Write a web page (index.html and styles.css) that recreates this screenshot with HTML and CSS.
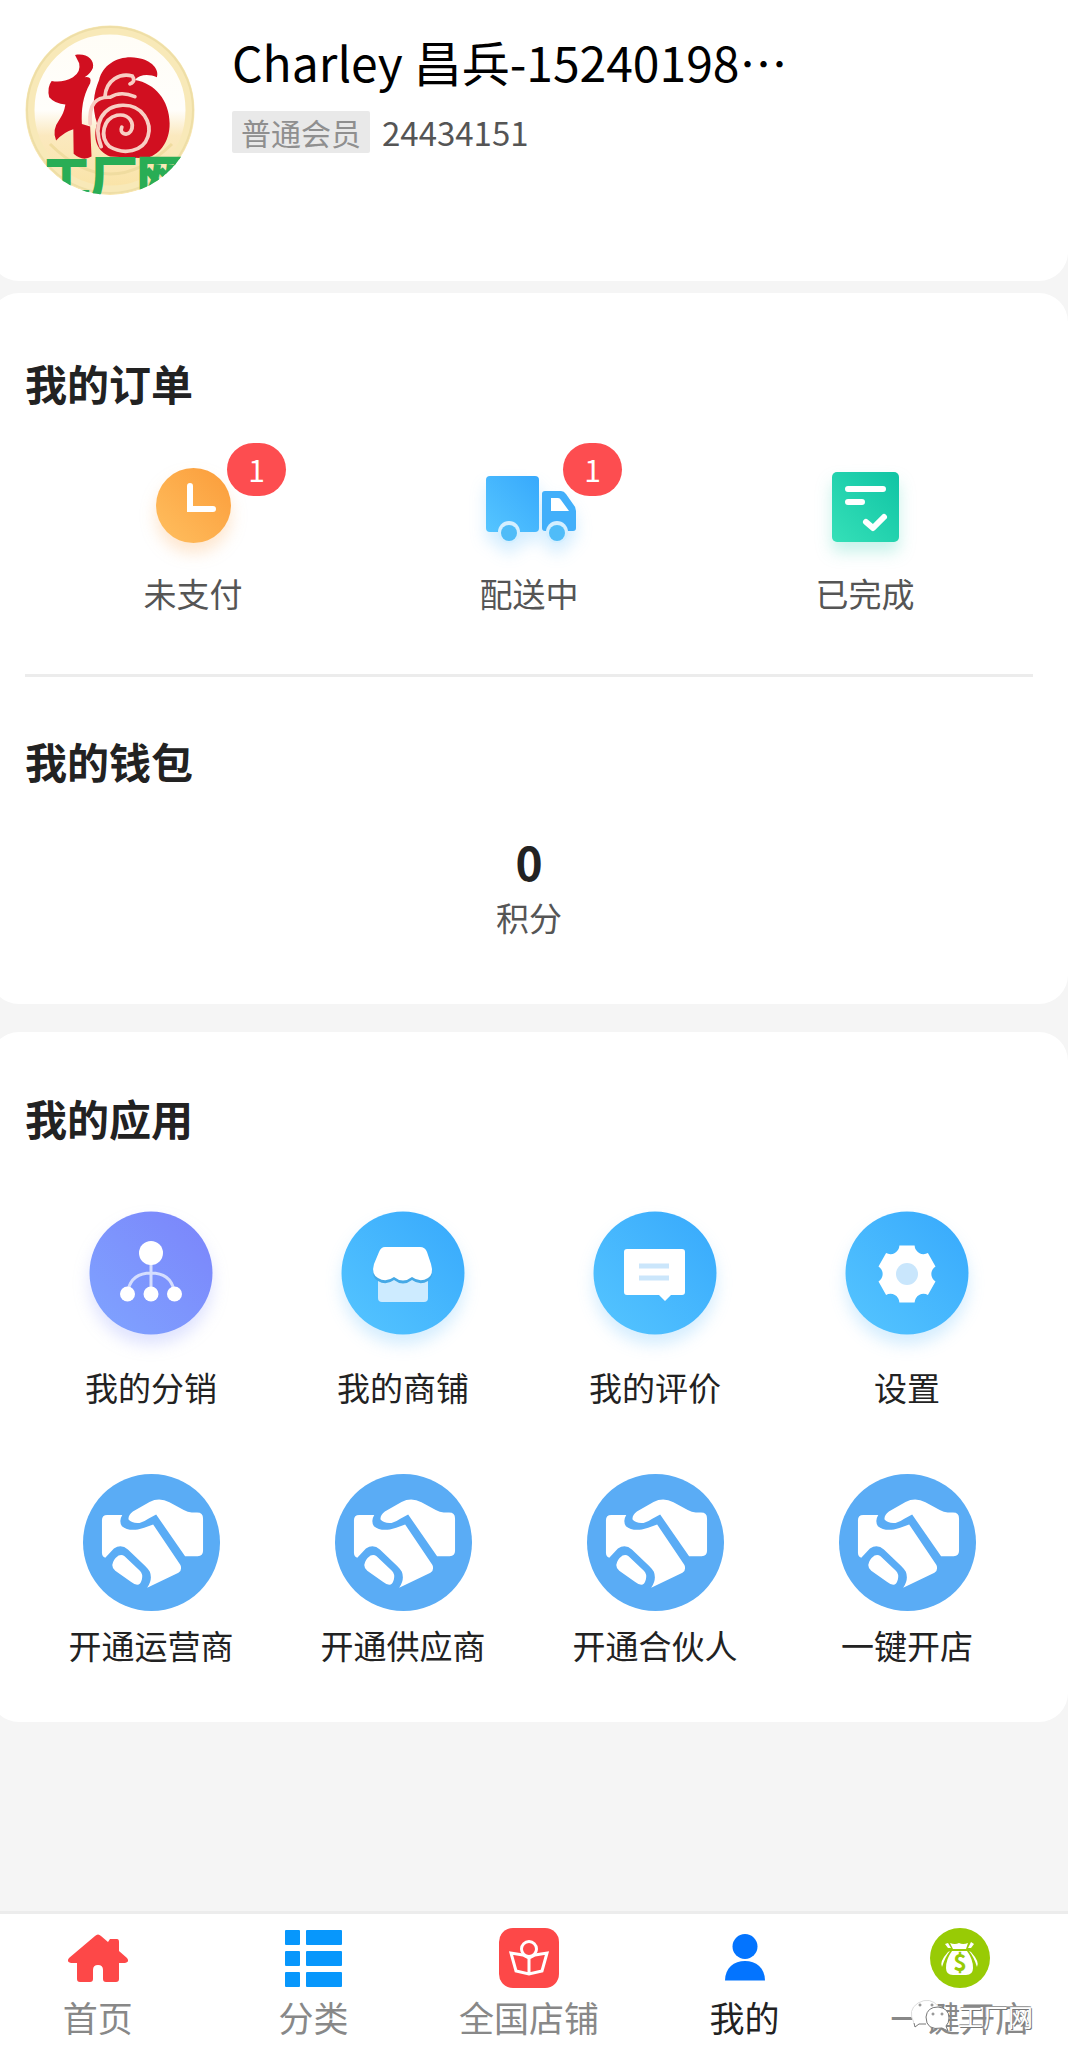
FILE: index.html
```html
<!DOCTYPE html>
<html lang="zh-CN">
  <head>
    <meta charset="UTF-8" />
    <meta name="viewport" content="width=device-width, initial-scale=1.0" />
    <title>我的</title>
    <link rel="stylesheet" href="styles.css">
  </head>
  <body>
    <!-- shared gradients and the handshake icon -->
    <svg class="defs" width="0" height="0" aria-hidden="true">
      <defs>
        <linearGradient id="orange" x1="0" y1="1" x2="1" y2="0">
          <stop offset="0" stop-color="#ffbf5f" />
          <stop offset="1" stop-color="#fb9c3a" />
        </linearGradient>
        <linearGradient id="blue" x1="0" y1="1" x2="1" y2="0">
          <stop offset="0" stop-color="#55c5ff" />
          <stop offset="1" stop-color="#37a9fc" />
        </linearGradient>
        <linearGradient id="green" x1="0" y1="1" x2="1" y2="0">
          <stop offset="0" stop-color="#35e0b8" />
          <stop offset="1" stop-color="#10c4a4" />
        </linearGradient>
        <linearGradient id="purple" x1="0" y1="1" x2="1" y2="0">
          <stop offset="0" stop-color="#7fa4ff" />
          <stop offset="1" stop-color="#7b84fb" />
        </linearGradient>
        <symbol id="hands" viewBox="125 71 412 412">
          <circle cx="331" cy="277" r="206" fill="#5aacf5" />
          <g fill="#fff">
            <path d="M486 205Q486 187 468 187H452Q440 186 428 179L385 156Q355 140 325 155L275 184Q260 196 262 208Q272 220 295 218Q308 215 320 206L345 193L432 318H470Q486 318 486 302Z" />
            <path d="M182 210Q182 194 198 194H243Q232 212 242 228Q258 242 290 238Q305 235 336 223L418 345Q424 360 412 368L318 413Q335 388 326 365Q322 358 312 348L260 298Q240 280 218 295L192 323Q182 320 182 308Z" />
            <path d="M213 345Q215 328 232 316Q242 312 250 318L296 362Q306 372 302 388Q298 404 288 404Q280 404 270 396L222 362Q213 355 213 345Z" />
          </g>
        </symbol>
      </defs>
    </svg>

    <header class="profile">
      <svg class="avatar" viewBox="0 0 169 169" role="img" aria-label="头像">
        <defs>
          <clipPath id="round"><circle cx="84" cy="84" r="85" /></clipPath>
          <linearGradient id="cream" x1="0" y1="0" x2="0" y2="1">
            <stop offset="0" stop-color="#fffdf6" />
            <stop offset="0.5" stop-color="#fffefb" />
            <stop offset="0.65" stop-color="#fbe9bf" />
            <stop offset="1" stop-color="#fae3a4" />
          </linearGradient>
        </defs>
        <g clip-path="url(#round)">
          <circle cx="84" cy="84" r="85" fill="url(#cream)" />
          <circle cx="84" cy="84" r="80" fill="none" stroke="#f8e9b8" stroke-width="9" />
          <circle cx="84" cy="84" r="83" fill="none" stroke="#eedea6" stroke-width="2" />
          <path d="M24 118Q84 178 146 118" fill="none" stroke="#f0dca0" stroke-width="3" />
          <g transform="scale(.344 .333) translate(-75.5 -78)">
            <path fill="#d10f20" d="M218 165C250 158 276 178 270 204Q262 222 246 232Q268 228 262 250C240 290 236 330 238 372L262 380L266 470Q240 486 214 462L213 388Q186 396 163 422Q150 390 172 360Q186 340 190 314Q160 312 143 292Q136 262 150 243Q180 250 212 232Q236 216 230 190Z" />
            <path fill="#d10f20" d="M288 240C300 190 350 165 400 174C440 180 464 208 456 232C435 222 405 222 392 240C450 250 492 300 493 370C494 425 462 470 420 475L320 470C284 455 268 420 282 370C266 320 272 280 288 240Z" />
            <g fill="none" stroke="#f8cfc4" stroke-width="11" stroke-linecap="round">
              <path d="M305 290C308 240 350 218 384 228Q396 244 378 252" />
              <path d="M262 372C258 310 280 290 320 292Q350 272 392 290" />
              <path d="M294 440C268 370 300 318 356 316C416 314 442 370 430 410C416 456 360 466 318 440C288 410 300 356 340 346C378 340 392 372 380 394C368 410 346 400 354 382" />
            </g>
          </g>
          <text class="avatar-text" x="17" y="169">工厂网</text>
        </g>
      </svg>
      <div class="info">
        <h1 class="name">Charley 昌兵-15240198…</h1>
        <p class="member"><span class="level">普通会员</span><span>24434151</span></p>
      </div>
    </header>

    <main>
      <section class="card">
        <h2>我的订单</h2>
        <nav class="orders">
          <a href="#">
            <span class="order-icon">
              <svg class="shadow-orange" viewBox="0 0 110 110">
                <circle cx="55.5" cy="55.5" r="37.5" fill="url(#orange)" />
                <path d="M52 36V59H75" fill="none" stroke="#fff" stroke-width="6" stroke-linecap="round" />
              </svg>
              <b class="badge">1</b>
            </span>
            未支付
          </a>
          <a href="#">
            <span class="order-icon">
              <svg class="shadow-blue" viewBox="0 0 110 110">
                <rect x="12" y="26" width="53" height="56" rx="4" fill="url(#blue)" />
                <path d="M71 41H87Q90 41 92 44L99 54Q102 57 102 61V78Q102 81 99 81H71Q68 81 68 78V44Q68 41 71 41Z" fill="#42affa" />
                <path d="M77 48H84Q86 48 87 50L95 61H77Z" fill="#fff" />
                <circle cx="35" cy="82" r="11" fill="#d4efff" />
                <circle cx="83" cy="82" r="11" fill="#d4efff" />
                <circle cx="35" cy="83" r="8" fill="#4fbcf8" />
                <circle cx="83" cy="83" r="8" fill="#4fbcf8" />
              </svg>
              <b class="badge">1</b>
            </span>
            配送中
          </a>
          <a href="#">
            <span class="order-icon">
              <svg class="shadow-green" viewBox="0 0 110 110">
                <rect x="22" y="22" width="67" height="70" rx="5" fill="url(#green)" />
                <path d="M38 39H73M38 52H52M56 72L63 78L74 67" fill="none" stroke="#fff" stroke-width="6" stroke-linecap="round" stroke-linejoin="round" />
              </svg>
            </span>
            已完成
          </a>
        </nav>
        <hr>
        <h2>我的钱包</h2>
        <div class="wallet">
          <strong>0</strong>
          <span>积分</span>
        </div>
      </section>

      <section class="card apps-card">
        <h2>我的应用</h2>
        <nav class="apps">
          <a href="#">
            <svg class="app-icon shadow-purple" viewBox="0 0 150 150">
              <circle cx="75" cy="75" r="61.5" fill="url(#purple)" />
              <path d="M75 60V95M52 92Q56 75 75 75Q94 75 98 92" fill="none" stroke="#d5defe" stroke-width="3" />
              <g fill="#fff">
                <circle cx="75" cy="55" r="12" />
                <circle cx="51.5" cy="96" r="7.5" />
                <circle cx="75" cy="96" r="7.5" />
                <circle cx="98.5" cy="96" r="7.5" />
              </g>
            </svg>
            我的分销
          </a>
          <a href="#">
            <svg class="app-icon shadow-blue" viewBox="0 0 150 150">
              <circle cx="75" cy="75" r="61.5" fill="url(#blue)" />
              <path d="M50 78H100V100Q100 104 96 104H54Q50 104 50 100Z" fill="#cdebff" />
              <path d="M57 49H92Q97 49 99 54L103 66Q106 76 100 80Q92 85 84 79Q75 86 66 79Q58 85 50 80Q43 76 46 66L51 54Q53 49 57 49Z" transform="translate(0 3)" fill="#45a9e6" />
              <path d="M57 49H92Q97 49 99 54L103 66Q106 76 100 80Q92 85 84 79Q75 86 66 79Q58 85 50 80Q43 76 46 66L51 54Q53 49 57 49Z" fill="#fff" />
            </svg>
            我的商铺
          </a>
          <a href="#">
            <svg class="app-icon shadow-blue" viewBox="0 0 150 150">
              <circle cx="75" cy="75" r="61.5" fill="url(#blue)" />
              <path d="M47 51H102Q105 51 105 54V94Q105 97 102 97H91L85 103L79 97H47Q44 97 44 94V54Q44 51 47 51Z" fill="#fff" />
              <path d="M59 68H89M59 80H89" stroke="#cbe6fb" stroke-width="5" />
            </svg>
            我的评价
          </a>
          <a href="#">
            <svg class="app-icon shadow-blue" viewBox="0 0 150 150">
              <circle cx="75" cy="75" r="61.5" fill="url(#blue)" />
              <path d="M82.6 47.5A9 9 0 0 0 95.9 55.1L103.5 68.4A9 9 0 0 0 103.5 83.6L95.9 96.9A9 9 0 0 0 82.6 104.5H67.4A9 9 0 0 0 54.1 96.9L46.5 83.6A9 9 0 0 0 46.5 68.4L54.1 55.1A9 9 0 0 0 67.4 47.5Z" fill="#fff" />
              <circle cx="75" cy="76" r="11" fill="#c9e6fc" />
            </svg>
            设置
          </a>
          <a href="#"><svg class="join-icon"><use href="#hands" /></svg>开通运营商</a>
          <a href="#"><svg class="join-icon"><use href="#hands" /></svg>开通供应商</a>
          <a href="#"><svg class="join-icon"><use href="#hands" /></svg>开通合伙人</a>
          <a href="#"><svg class="join-icon"><use href="#hands" /></svg>一键开店</a>
        </nav>
      </section>
    </main>

    <footer class="tabbar">
      <nav class="tabs">
        <a href="#">
          <svg viewBox="0 0 60 60">
            <path fill="#fd4848" d="M27 8Q30 5 33 8L40 14L42 11H49Q51 11 51 14V23L59 30Q62 34 57 35H51V51Q51 54 48 54H38Q35 54 35 51V42Q35 37 30 37Q25 37 25 42V51Q25 54 22 54H12Q9 54 9 51V35H3Q-2 34 1 30Z" />
          </svg>
          首页
        </a>
        <a href="#">
          <svg viewBox="0 0 60 60" fill="#0797fc">
            <rect x="2" y="2" width="15" height="15" rx="1" />
            <rect x="23" y="2" width="36" height="15" rx="1" />
            <rect x="2" y="23" width="15" height="15" rx="1" />
            <rect x="23" y="23" width="36" height="15" rx="1" />
            <rect x="2" y="44" width="15" height="15" rx="1" />
            <rect x="23" y="44" width="36" height="15" rx="1" />
          </svg>
          分类
        </a>
        <a href="#">
          <svg viewBox="0 0 60 60">
            <rect width="60" height="60" rx="14" fill="#fd4848" />
            <g fill="none" stroke="#fff" stroke-width="3">
              <path d="M24 27L12 25L17 43L30 46L43 43L48 25L36 27L30 30L24 27M30 30V47" />
              <circle cx="30" cy="21" r="7.5" fill="#fd4848" />
            </g>
          </svg>
          全国店铺
        </a>
        <a class="active" href="#">
          <svg viewBox="0 0 60 60" fill="#0374ff">
            <circle cx="30" cy="18.5" r="12.5" />
            <path d="M10 52.5C10 40 19 33 30 33S50 40 50 52.5Z" />
          </svg>
          我的
        </a>
        <a href="#">
          <svg viewBox="0 0 60 60">
            <circle cx="30" cy="30" r="30" fill="#98cb05" />
            <g fill="#fff">
              <path d="M20 15Q25 17 29 15Q33 17 38 15L36 21H23Z" />
              <path d="M22 23H37Q43 31 43 40Q43 47 36 47H23Q16 47 16 40Q16 31 22 23Z" />
              <path d="M18 24Q9 34 12 39Q15 29 20 23ZM41 24Q50 34 47 39Q44 29 39 23Z" />
              <path d="M18 15L15 16L18 20H21ZM41 14L44 16L41 20H38Z" />
            </g>
            <text class="dollar" x="30" y="43">$</text>
          </svg>
          一键开店
        </a>
      </nav>
      <div class="watermark">
        <svg viewBox="0 0 44 36">
          <path d="M4 25Q-3 12 8 5Q20 -2 29 9" fill="#fff" stroke="#ddd" stroke-width="1" />
          <path d="M4 25L5 29L9 26L17 26V8L5 12Z" fill="#fff" />
          <path d="M4 25L5 29L9 26H16" fill="none" stroke="#777" stroke-width="1" />
          <path d="M16 19Q17 9 28 9Q39 10 39 20Q39 25 36 28L38 33L32 30Q16 33 16 19Z" fill="#fff" stroke="#777" stroke-width="1" />
          <g fill="#fff" stroke="#777" stroke-width="1">
            <circle cx="10" cy="7" r="1" /><circle cx="22" cy="7" r="1" />
            <circle cx="23" cy="16" r="1" /><circle cx="32" cy="16" r="1" />
          </g>
        </svg>
        <span>工厂网</span>
      </div>
    </footer>
  </body>
</html>
```
FILE: styles.css
```css
* {
  margin: 0;
  padding: 0;
  box-sizing: border-box;
}
body {
  background-color: #f5f5f5;
  color: #222;
  font-family: "Noto Sans CJK SC", "Noto Sans", sans-serif;
  font-size: 33px;
  line-height: 48px;
  padding-bottom: 150px;
  overflow-x: hidden;
}
a {
  color: inherit;
  text-decoration: none;
}
svg {
  display: block;
  overflow: visible;
}
.defs {
  position: absolute;
}

/* profile */
.profile {
  display: flex;
  gap: 37px;
  margin-left: -10px;
  padding: 26px 36px 86px;
  background-color: #fff;
  border-radius: 0 0 29px 29px;
}
.avatar {
  width: 169px;
  height: 169px;
  flex-shrink: 0;
}
.avatar-text {
  font-size: 47px;
  font-weight: bold;
  fill: #29ad55;
  stroke: #29ad55;
  stroke-width: 2px;
}
.info {
  padding-top: 5px;
}
.name {
  color: #000;
  font-size: 48px;
  font-weight: normal;
  line-height: 60px;
}
.member {
  display: flex;
  gap: 12px;
  margin-top: 20px;
  color: #555;
  line-height: 42px;
}
.level {
  padding: 0 9px;
  background-color: #e9e9e9;
  border-radius: 2px;
  color: #8f8f8f;
  font-size: 30px;
}

/* cards */
.card {
  margin-top: 12px;
  margin-left: -10px;
  padding: 60px 35px 63px;
  background-color: #fff;
  border-radius: 29px;
}
.apps-card {
  margin-top: 28px;
  padding-top: 56px;
  padding-bottom: 53px;
}
h2 {
  font-size: 42px;
  line-height: 60px;
}
hr {
  height: 3px;
  margin: 57px 0 54px;
  border: none;
  background-color: #ececec;
}

.orders {
  display: grid;
  grid-template-columns: repeat(3, 1fr);
  margin-top: 37px;
  color: #555;
}
.orders a {
  display: flex;
  flex-direction: column;
  align-items: center;
  gap: 9px;
}
.order-icon {
  position: relative;
  width: 110px;
  height: 110px;
}
.badge {
  position: absolute;
  left: 89px;
  top: -7px;
  width: 59px;
  height: 53px;
  border-radius: 27px;
  background-color: #fd4d50;
  color: #fff;
  font-size: 30px;
  font-weight: normal;
  line-height: 53px;
  text-align: center;
}

.wallet {
  display: flex;
  flex-direction: column;
  align-items: center;
  margin-top: 38px;
  color: #555;
}
.wallet strong {
  color: #222;
  font-size: 46px;
  line-height: 64px;
}

.apps {
  display: grid;
  grid-template-columns: repeat(4, 1fr);
  row-gap: 63px;
  margin-top: 50px;
}
.apps a {
  display: flex;
  flex-direction: column;
  align-items: center;
}
.app-icon {
  width: 150px;
  height: 150px;
  margin-bottom: 15px;
}
.join-icon {
  width: 137px;
  height: 137px;
  margin-bottom: 10px;
}

.shadow-orange {
  filter: drop-shadow(0 10px 8px rgba(251, 156, 58, 0.25));
}
.shadow-blue {
  filter: drop-shadow(0 10px 8px rgba(60, 175, 252, 0.22));
}
.shadow-green {
  filter: drop-shadow(0 10px 8px rgba(30, 205, 170, 0.25));
}
.shadow-purple {
  filter: drop-shadow(0 10px 8px rgba(123, 140, 251, 0.25));
}

/* bottom tabs */
.tabbar {
  position: fixed;
  left: 0;
  right: 0;
  bottom: 0;
  background-color: #fff;
  border-top: 3px solid #ececec;
}
.tabs {
  display: grid;
  grid-template-columns: repeat(5, 1fr);
  margin-left: -10px;
  padding: 14px 0 20px;
  color: #888;
  font-size: 35px;
}
.tabs a {
  display: flex;
  flex-direction: column;
  align-items: center;
  gap: 5px;
}
.tabs svg {
  width: 60px;
  height: 60px;
}
.tabs .active {
  color: #222;
}
.dollar {
  fill: #98cb05;
  font-size: 23px;
  font-weight: bold;
  text-anchor: middle;
}
.watermark {
  position: absolute;
  right: 35px;
  top: 84px;
  display: flex;
  align-items: center;
  gap: 4px;
  color: #fff;
  font-size: 25px;
  line-height: 36px;
  text-shadow: 1px 1px 0 #777, 0 -1px 0 #999;
}
.watermark svg {
  width: 44px;
  height: 36px;
}
```
